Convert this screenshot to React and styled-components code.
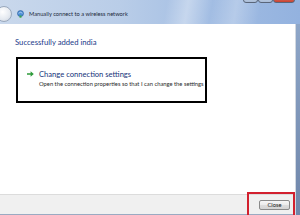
import React from 'react';
import styled, { createGlobalStyle } from 'styled-components';

const GlobalStyle = createGlobalStyle`
  html, body {
    margin: 0;
    padding: 0;
    width: 300px;
    height: 215px;
    overflow: hidden;
    font-family: Lato, "Open Sans", "Noto Sans", sans-serif;
  }
`;

const Window = styled.div`
  position: relative;
  width: 300px;
  height: 215px;
  display: flex;
  flex-direction: column;
  background: #7f97bc;
  overflow: hidden;
`;

const TitleBar = styled.div`
  position: relative;
  height: 24px;
  display: flex;
  align-items: center;
  gap: 5px;
  padding-top: 3px;
  box-sizing: border-box;
  background:
    linear-gradient(100deg, rgba(255,255,255,0) 55%, rgba(255,255,255,0.35) 62%, rgba(255,255,255,0) 70%, rgba(255,255,255,0.25) 78%, rgba(255,255,255,0) 86%),
    linear-gradient(90deg, #c9d8ec 0%, #b9cde8 40%, #a2bde3 70%, #93b2df 100%);
`;

const BackButton = styled.div`
  width: 14px;
  height: 14px;
  margin-left: -4px;
  border-radius: 50%;
  border: 1px solid #9aa9bd;
  background: radial-gradient(circle at 40% 35%, #ffffff 0%, #e4e9f0 60%, #c4ccd8 100%);
`;

const TitleText = styled.span`
  font-size: 5.7px;
  color: #1c2a3c;
  white-space: nowrap;
`;

const Controls = styled.div`
  position: absolute;
  top: -7px;
  right: 5px;
  display: flex;
`;

const ControlButton = styled.div`
  width: ${p => p.$w}px;
  height: 10px;
  box-sizing: border-box;
  border: 1px solid #5a667a;
  border-radius: 0 0 3px 3px;
  background: ${p => (p.$close ? 'linear-gradient(#e49b8e, #c8412f)' : 'linear-gradient(#d7e2f1, #a9bcd7)')};
`;

const Body = styled.div`
  flex: 1;
  display: flex;
  min-height: 0;
`;

const Content = styled.div`
  flex: 1;
  display: flex;
  flex-direction: column;
  background: #ffffff;
  border-right: 1px solid #d2d8e0;
`;

const Frame = styled.div`
  width: 4px;
  background: linear-gradient(#8ea6c8, #6f86aa);
`;

const Main = styled.div`
  flex: 1;
  padding: 12px 0 0 15px;
  display: flex;
  flex-direction: column;
  align-items: flex-start;
`;

const Heading = styled.div`
  font-size: 7.7px;
  line-height: 12px;
  color: #1b3a8a;
`;

const OptionBox = styled.div`
  margin-top: 9px;
  margin-left: 1px;
  width: 191px;
  height: 46px;
  box-sizing: border-box;
  border: 2.5px solid #000000;
  padding: 9px 0 0 9px;
  display: flex;
  gap: 5px;
  overflow: hidden;
`;

const Arrow = styled.svg`
  flex: none;
  margin-top: 3px;
`;

const OptionText = styled.div`
  display: flex;
  flex-direction: column;
  white-space: nowrap;
`;

const OptionTitle = styled.span`
  font-size: 7.6px;
  line-height: 12px;
  color: #15337a;
`;

const OptionDesc = styled.span`
  font-size: 5.8px;
  line-height: 8px;
  color: #2a2a2a;
`;

const Footer = styled.div`
  height: 21px;
  box-sizing: border-box;
  border-top: 1px solid #dcdcdc;
  border-bottom: 1px solid #9aaac2;
  background: #f0f0f0;
  display: flex;
  align-items: center;
  justify-content: flex-end;
  padding-right: 5px;
`;

const Button = styled.div`
  width: 31px;
  height: 10px;
  box-sizing: border-box;
  border: 1px solid #8a8a8a;
  border-radius: 2px;
  background: linear-gradient(#f6f6f6 0%, #ebebeb 50%, #dddddd 51%, #d3d3d3 100%);
  font-size: 5.8px;
  line-height: 8px;
  color: #1a1a1a;
  text-align: center;
`;

const Highlight = styled.div`
  position: absolute;
  left: 247px;
  top: 192px;
  width: 48px;
  height: 26px;
  box-sizing: border-box;
  border: 2px solid #d2202e;
`;

const WifiIcon = () => (
  <svg width="7" height="8" viewBox="0 0 7 8">
    <circle cx="3.5" cy="3.5" r="3" fill="#4d8fd6" stroke="#2a5a9a" strokeWidth="0.6" />
    <path d="M1.5 3.2 Q3.5 1.4 5.5 3.2" fill="none" stroke="#e8f2ff" strokeWidth="0.6" />
    <rect x="2.5" y="5.5" width="2" height="2.2" fill="#3aa64a" />
  </svg>
);

const App = () => (
  <>
    <GlobalStyle />
    <Window>
      <TitleBar>
        <BackButton />
        <WifiIcon />
        <TitleText>Manually connect to a wireless network</TitleText>
        <Controls>
          <ControlButton $w={15} />
          <ControlButton $w={15} />
          <ControlButton $w={22} $close />
        </Controls>
      </TitleBar>
      <Body>
        <Content>
          <Main>
            <Heading>Successfully added india</Heading>
            <OptionBox>
              <Arrow width="7" height="6" viewBox="0 0 7 6">
                <path d="M0 2.2 H3.6 V0.3 L6.8 3 L3.6 5.7 V3.8 H0 Z" fill="#2e9b3a" />
              </Arrow>
              <OptionText>
                <OptionTitle>Change connection settings</OptionTitle>
                <OptionDesc>Open the connection properties so that I can change the settings</OptionDesc>
              </OptionText>
            </OptionBox>
          </Main>
          <Footer>
            <Button>Close</Button>
          </Footer>
        </Content>
        <Frame />
      </Body>
      <Highlight />
    </Window>
  </>
);

export default App;
